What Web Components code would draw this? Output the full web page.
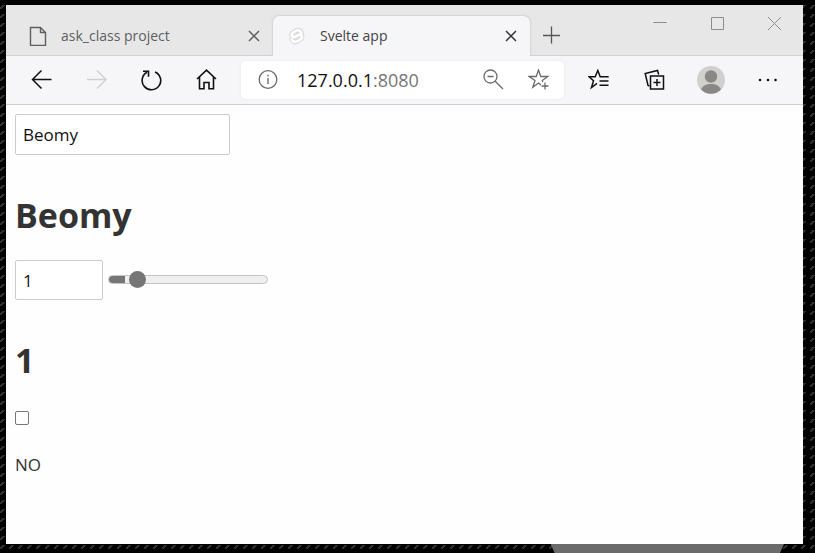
<!DOCTYPE html>
<html lang="en">
<head>
<meta charset="utf-8">
<title>Svelte app</title>
<style>
html, body { height: 100%; }
body { margin: 0; font-family: "Open Sans", "Noto Sans", sans-serif; color: #333; }
</style>
</head>
<body>
<desk-top>
  <browser-window>
    <tab-strip slot="tabs">
      <browser-tab label="ask_class project" icon="file"></browser-tab>
      <browser-tab label="Svelte app" icon="svelte" active></browser-tab>
    </tab-strip>
    <tool-bar slot="tools"></tool-bar>
    <binding-demo></binding-demo>
  </browser-window>
</desk-top>
<script>
const ICONS = {
  file: '<path d="M2.5 1.5h10l5 5v13h-15zM12.500 1.500v5h5" stroke-width="1.4"/>',
  svelte: '<g stroke-linecap="round" stroke-linejoin="round"><path d="M14.500 7.200C13.500 4 10.500 3.800 8.500 5L6 6.700C3.500 8.500 5 11.500 7.500 11L12 8.800C15 8 16 11.500 13.500 13.200L10.500 15.200C8 16.500 5.500 15.800 4.800 13.200" stroke="#dcdcdc" stroke-width="5"/><path d="M14.500 7.200C13.500 4 10.500 3.800 8.500 5L6 6.700C3.500 8.500 5 11.500 7.500 11L12 8.800C15 8 16 11.500 13.500 13.200L10.500 15.200C8 16.500 5.500 15.800 4.800 13.200" stroke="#fff" stroke-width="2.500"/></g>',
  close: '<path d="M5 5l10 10M15 5L5 15" stroke-width="1.5"/>',
  plus: '<path d="M9.500 1.500v17M1 10.500h17" stroke-width="1.3"/>',
  min: '<path d="M2.500 9.500h13"/>',
  max: '<path d="M3.500 4.500h12v12h-12z"/>',
  quit: '<path d="M3 4l13 13M16 4L3 17"/>',
  back: '<path d="M20.500 10.500H1.500M10.500 1.500l-9 9 9 9" stroke-width="1.500"/>',
  forward: '<path d="M1 10.500h19M11 1.500l9 9-9 9" stroke-width="1.300"/>',
  reload: '<path d="M14 2.900A9.300 9.300 0 1 1 6 3.300M2 2.200h5.500v5.500" stroke-width="1.600"/>',
  home: '<path d="M1 10L10.500 1.200 20 10M3.500 8v11.800h4.500v-6.300h5v6.300h4.500V8" stroke-width="1.600"/>',
  info: '<circle cx="11" cy="10.500" r="8.800" stroke-width="1.300"/><path d="M11 9v6M11 5.800v1.700" stroke-width="1.400"/>',
  zoom: '<circle cx="8.500" cy="7.500" r="6.500" stroke-width="1.300"/><path d="M13.200 12.200L21 20M5.500 7.500h6" stroke-width="1.300"/>',
  starplus: '<path d="M13 16l-2.500-2-5.700 4.300L7 11.500 1.200 7.500h7l2.300-6.500 2.300 6.500h7l-5.500 4 .4 1.500M17 13.500v7M13.500 17h7" stroke-width="1.300"/>',
  favorites: '<path d="M9 14.300l-5.500 4.200 2-6.700L1 7.700h6.200L9.800 1.500l2.400 6.200h8.500M11.500 12h9M11.500 16.300h9" stroke-width="1.500"/>',
  collections: '<rect x="6.500" y="7" width="13" height="13" stroke-width="1.500"/><path d="M13 10v7M9.500 13.500h7M5.500 17L4 16.500 1.200 4.500 13.500 1.500l1.200 4" stroke-width="1.500"/>',
  avatar: '<circle cx="14" cy="14" r="14" fill="#d2d0ce" stroke="none"/><circle cx="14" cy="10.500" r="6.200" fill="#8a8886" stroke="none"/><path d="M4 23.500c2-4 5-5.500 10-5.500s8 1.500 10 5.500A14 14 0 0 1 4 23.500" fill="#8a8886" stroke="none"/>',
  more: '<g fill="currentColor" stroke="none"><circle cx="4" cy="11" r="1.300"/><circle cx="12" cy="11" r="1.300"/><circle cx="19.500" cy="11" r="1.300"/></g>'
};
function define(name, markup, setup) {
  const template = document.createElement('template');
  template.innerHTML = markup;
  customElements.define(name, class extends HTMLElement {
    constructor() {
      super();
      this.attachShadow({ mode: 'open' }).append(template.content.cloneNode(true));
    }
    connectedCallback() { if (setup) setup(this, this.shadowRoot); }
  });
}

define('line-icon', `<style>
:host { display: block; flex: none; }
svg { display: block; fill: none; stroke: currentColor; stroke-width: 1; }
</style><svg aria-hidden="true"></svg>`, (host, root) => {
  const size = Number(host.getAttribute('size') || 22);
  const svg = root.querySelector('svg');
  svg.setAttribute('width', size);
  svg.setAttribute('height', size);
  svg.setAttribute('viewBox', '0 0 ' + size + ' ' + size);
  svg.innerHTML = ICONS[host.getAttribute('name')];
});

define('icon-button', `<style>
:host { display: flex; flex: none; }
button { flex: 1; display: grid; place-items: center; padding: 0; border: 0; background: none; color: inherit; }
</style><button type="button"><line-icon></line-icon></button>`, (host, root) => {
  root.querySelector('button').setAttribute('aria-label', host.getAttribute('label'));
  const old = root.querySelector('line-icon');
  const icon = document.createElement('line-icon');
  icon.setAttribute('name', host.getAttribute('icon'));
  icon.setAttribute('size', host.getAttribute('size') || '22');
  old.replaceWith(icon);
});

define('desk-top', `<style>
:host { display: flex; flex-direction: column; min-height: 100vh; box-sizing: border-box; padding: 5px 12px 0 6px;
  background: linear-gradient(#000 5px, transparent 5px) 0 0 / 9px 9px,
    linear-gradient(135deg, transparent 42%, #303030 42%, #303030 58%, transparent 58%) 0 0 / 9px 9px #000; }
::slotted(*) { flex: 1; }
footer { height: 9px; display: flex; justify-content: flex-end; padding-right: 19px; }
span { width: 30%; background: #6b6b6b; clip-path: polygon(0 0, 100% 0, calc(100% - 4px) 100%, 4px 100%); }
</style><slot></slot><footer><span></span></footer>`);

define('browser-window', `<style>
:host { display: flex; flex-direction: column; background: #fefefe; }
main { flex: 1; padding: 9px; }
</style><slot name="tabs"></slot><slot name="tools"></slot><main><slot></slot></main>`);

define('tab-strip', `<style>
:host { display: flex; height: 51px; background: #e7e7e7; color: #555; box-shadow: inset 0 -1px #d2d2d2; }
.tabs { flex: 0 1 524px; display: flex; align-items: flex-end; }
.add { width: 44px; height: 40px; margin-top: 10px; }
.controls { display: flex; margin-left: auto; height: 36px; color: #8c8c8c; }
.controls icon-button { width: 57px; }
</style><div class="tabs"><slot></slot></div>
<icon-button class="add" icon="plus" size="20" label="New tab"></icon-button>
<div class="controls">
<icon-button icon="min" size="20" label="Minimize"></icon-button>
<icon-button icon="max" size="20" label="Maximize"></icon-button>
<icon-button icon="quit" size="20" label="Close window"></icon-button></div>`);

define('browser-tab', `<style>
:host { flex: 1 1 267px; display: flex; align-items: center; height: 40px; box-sizing: border-box; padding: 0 9px 0 22px; font-size: 14px; line-height: 20px; color: #5f5f5f; border-radius: 6px 6px 0 0; }
:host([active]) { flex-basis: 257px; background: #f6f5f7; color: #444; padding-left: 14px; box-shadow: 0 0 2px #aaa; clip-path: inset(-3px -3px 0 -3px); }
span { flex: 1; margin-left: 13px; white-space: nowrap; }
icon-button { width: 20px; height: 20px; }
:host([active]) icon-button { color: #333; }
</style><line-icon size="20"></line-icon><span></span><icon-button icon="close" size="20" label="Close tab"></icon-button>`, (host, root) => {
  root.querySelector('span').textContent = host.getAttribute('label');
  const icon = document.createElement('line-icon');
  icon.setAttribute('name', host.getAttribute('icon'));
  icon.setAttribute('size', '20');
  root.querySelector('line-icon').replaceWith(icon);
});

define('address-bar', `<style>
:host { display: flex; align-items: center; height: 38px; padding: 0 14px 0 16px; box-sizing: border-box; background: #fff; border-radius: 5px; box-shadow: 0 0 2px 1px #efeef0; color: #6b6b6b; }
a { flex: 1; margin-left: 18px; font-size: 18px; line-height: 26px; color: #757575; text-decoration: none; white-space: nowrap; }
b { font-weight: 400; color: #111; }
.zoom { margin-right: 24px; }
</style><icon-button icon="info" label="Site information"></icon-button>
<a href="#"><b>127.0.0.1</b>:8080</a>
<icon-button class="zoom" icon="zoom" label="Zoom out"></icon-button>
<icon-button icon="starplus" label="Add to favorites"></icon-button>`);

define('tool-bar', `<style>
:host { display: flex; align-items: center; height: 49px; box-sizing: border-box; padding: 0 8px; background: #f6f5f7; border-bottom: 1px solid #d0d0ce; color: #111; }
icon-button { width: 55px; height: 40px; }
.end { width: 56px; }
.off { color: #d0cfcd; }
address-bar { flex: 1; margin: 0 7px; }
</style>
<icon-button icon="back" label="Back"></icon-button>
<icon-button class="off" icon="forward" label="Forward"></icon-button>
<icon-button icon="reload" label="Refresh"></icon-button>
<icon-button icon="home" label="Home"></icon-button>
<address-bar></address-bar>
<icon-button class="end" icon="favorites" label="Favorites"></icon-button>
<icon-button class="end" icon="collections" label="Collections"></icon-button>
<icon-button class="end" icon="avatar" size="28" label="Profile"></icon-button>
<icon-button class="end" icon="more" label="Settings and more"></icon-button>`);

define('binding-demo', `<style>
:host { display: flex; flex-direction: column; align-items: flex-start; font-size: 17px; line-height: 24px; }
input { font: inherit; color: #111; box-sizing: border-box; margin: 0; }
.box { height: 40px; padding: 7px; border: 1px solid #ccc; border-radius: 2px; background: #fff; appearance: textfield; outline: 0; }
.box::-webkit-inner-spin-button { display: none; }
.name { width: 215px; height: 41px; }
.count { width: 88px; }
h1 { margin: 36px 0 21px; font-size: 34px; line-height: 48px; font-weight: 700; }
.row { display: flex; align-items: center; gap: 5px; }
.slide { appearance: none; width: 160px; height: 18px; margin-bottom: 2px; background: none; }
.slide::-webkit-slider-runnable-track { height: 9px; box-sizing: border-box; border: 1px solid #c4c4c4; border-radius: 5px; background: linear-gradient(90deg, #767676 17px, #efefef 17px) border-box; }
.slide::-webkit-slider-thumb { appearance: none; width: 17px; height: 17px; margin-top: -5px; border-radius: 50%; background: #767676; }
.tick { width: 14px; height: 14px; margin-top: 6px; appearance: none; border: 1px solid #767676; border-radius: 2px; background: #fff; }
.tick:checked { background: #767676; }
p { margin: 28px 0 0; }
</style>
<input class="box name" type="text" value="Beomy" aria-label="Name">
<h1 class="title">Beomy</h1>
<div class="row"><input class="box count" type="number" value="1" min="0" max="7" aria-label="Number">
<input class="slide" type="range" value="1" min="0" max="7" aria-label="Number slider"></div>
<h1 class="total">1</h1>
<input class="tick" type="checkbox" aria-label="Answer">
<p>NO</p>`, (host, root) => {
  const get = s => root.querySelector(s);
  get('.name').oninput = e => { get('.title').textContent = e.target.value; };
  const sync = e => {
    get('.count').value = get('.slide').value = e.target.value;
    get('.total').textContent = e.target.value;
  };
  get('.count').oninput = sync;
  get('.slide').oninput = sync;
  get('.tick').onchange = e => { get('p').textContent = e.target.checked ? 'YES' : 'NO'; };
});
</script>
</body>
</html>
